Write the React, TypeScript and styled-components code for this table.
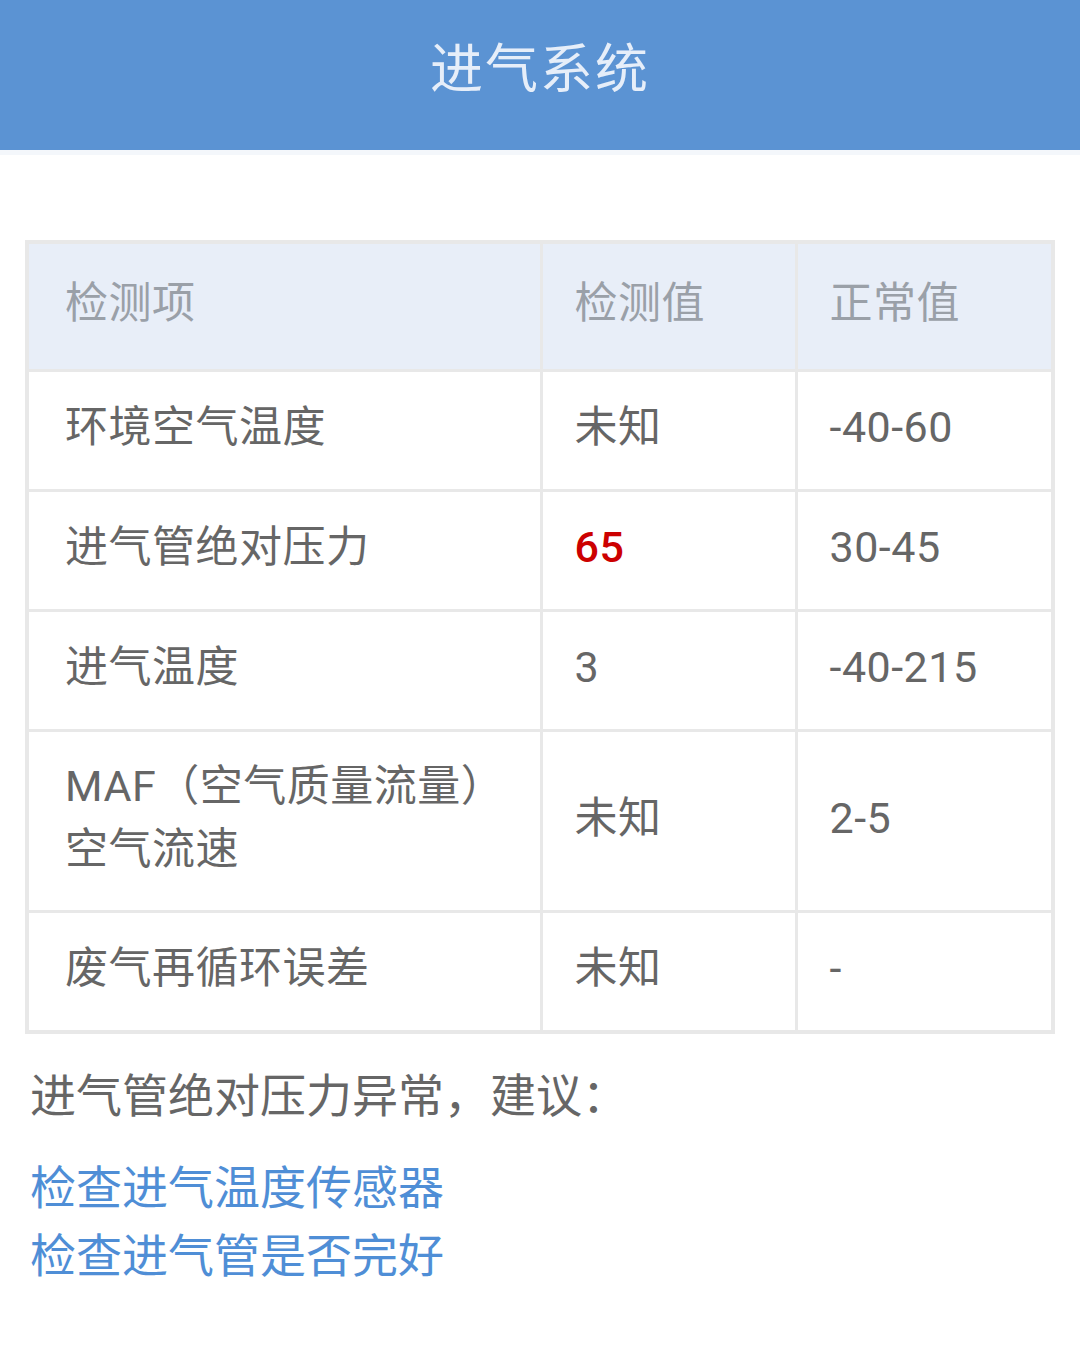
import React from "react";
import styled, { createGlobalStyle } from "styled-components";

const Global = createGlobalStyle`
  html, body { margin: 0; padding: 0; background: #ffffff; }
  body { font-family: Roboto, "Noto Sans CJK SC", sans-serif; }
`;

const Page = styled.div`
  width: 1080px;
  min-height: 1352px;
  background: #ffffff;
  display: flex;
  flex-direction: column;
`;

const Header = styled.header`
  height: 150px;
  background: #5b93d3;
  display: flex;
  align-items: center;
  justify-content: center;
  border-bottom: 5px solid #f4f7fb;
`;

const Title = styled.h1`
  margin: 0 0 20px;
  font-family: "Noto Sans CJK SC", sans-serif;
  font-weight: 400;
  font-size: 53px;
  color: #e6eef9;
  letter-spacing: 2px;
`;

const Content = styled.main`
  padding: 85px 25px 0;
  display: flex;
  flex-direction: column;
`;

const Table = styled.table`
  width: 1030px;
  border-collapse: collapse;
  border: 4px solid #e8e8e8;
  table-layout: fixed;
`;

const Cell = styled.td<{ $head?: boolean; $h?: number }>`
  height: ${(p) => p.$h ?? 111}px;
  border: 3px solid #e8e8e8;
  padding: 0 12px 6px 32px;
  background: ${(p) => (p.$head ? "#e8eef8" : "#ffffff")};
  color: ${(p) => (p.$head ? "#9aa0a8" : "#666666")};
  font-family: Roboto, "Noto Sans CJK SC", sans-serif;
  font-size: 43px;
  font-weight: 400;
  text-align: left;
  line-height: 63px;
  letter-spacing: 0.5px;
  vertical-align: middle;
  &:first-child { padding-left: 36px; }
`;

const HeadCell = styled(Cell).attrs({ as: "th" })``;

const Value = styled.span<{ $alert?: boolean }>`
  color: ${(p) => (p.$alert ? "#cc0000" : "inherit")};
  font-weight: ${(p) => (p.$alert ? 500 : 400)};
`;

const Advice = styled.p`
  margin: 26px 0 0 5px;
  font-family: "Noto Sans CJK SC", sans-serif;
  font-size: 46px;
  line-height: 64px;
  color: #666666;
`;

const Links = styled.div`
  margin: 26px 0 0 5px;
  display: flex;
  flex-direction: column;
`;

const Link = styled.a`
  font-family: "Noto Sans CJK SC", sans-serif;
  font-size: 46px;
  line-height: 68px;
  color: #4f8ed6;
  text-decoration: none;
`;

const rows: { name: React.ReactNode; key: string; value: string; normal: string; alert?: boolean; h?: number }[] = [
  { key: "a", name: "环境空气温度", value: "未知", normal: "-40-60" },
  { key: "b", name: "进气管绝对压力", value: "65", normal: "30-45", alert: true },
  { key: "c", name: "进气温度", value: "3", normal: "-40-215" },
  {
    key: "d",
    name: (
      <>
        MAF（空气质量流量）
        <br />
        空气流速
      </>
    ),
    value: "未知",
    normal: "2-5",
    h: 172,
  },
  { key: "e", name: "废气再循环误差", value: "未知", normal: "-" },
];

export default function App() {
  return (
    <Page>
      <Global />
      <Header>
        <Title>进气系统</Title>
      </Header>
      <Content>
        <Table>
          <colgroup>
            <col style={{ width: 514 }} />
            <col style={{ width: 255 }} />
            <col style={{ width: 257 }} />
          </colgroup>
          <thead>
            <tr>
              <HeadCell $head $h={119}>检测项</HeadCell>
              <HeadCell $head $h={119}>检测值</HeadCell>
              <HeadCell $head $h={119}>正常值</HeadCell>
            </tr>
          </thead>
          <tbody>
            {rows.map((r) => (
              <tr key={r.key}>
                <Cell $h={r.h}>{r.name}</Cell>
                <Cell $h={r.h}>
                  <Value $alert={r.alert}>{r.value}</Value>
                </Cell>
                <Cell $h={r.h}>{r.normal}</Cell>
              </tr>
            ))}
          </tbody>
        </Table>
        <Advice>进气管绝对压力异常，建议：</Advice>
        <Links>
          <Link href="#">检查进气温度传感器</Link>
          <Link href="#">检查进气管是否完好</Link>
        </Links>
      </Content>
    </Page>
  );
}
